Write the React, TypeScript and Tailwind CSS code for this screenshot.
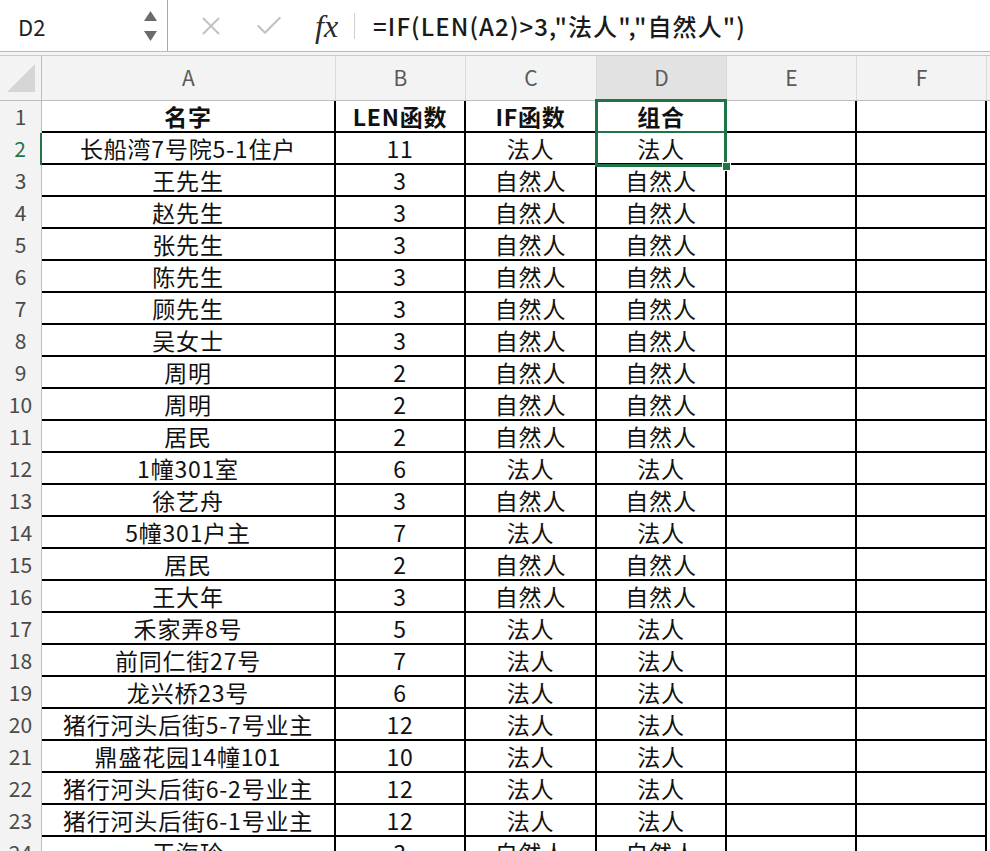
import { X, Check } from "lucide-react";

type Row = [string, string, string, string];

const rows: Row[] = [
  ["名字", "LEN函数", "IF函数", "组合"],
  ["长船湾7号院5-1住户", "11", "法人", "法人"],
  ["王先生", "3", "自然人", "自然人"],
  ["赵先生", "3", "自然人", "自然人"],
  ["张先生", "3", "自然人", "自然人"],
  ["陈先生", "3", "自然人", "自然人"],
  ["顾先生", "3", "自然人", "自然人"],
  ["吴女士", "3", "自然人", "自然人"],
  ["周明", "2", "自然人", "自然人"],
  ["周明", "2", "自然人", "自然人"],
  ["居民", "2", "自然人", "自然人"],
  ["1幢301室", "6", "法人", "法人"],
  ["徐艺舟", "3", "自然人", "自然人"],
  ["5幢301户主", "7", "法人", "法人"],
  ["居民", "2", "自然人", "自然人"],
  ["王大年", "3", "自然人", "自然人"],
  ["禾家弄8号", "5", "法人", "法人"],
  ["前同仁街27号", "7", "法人", "法人"],
  ["龙兴桥23号", "6", "法人", "法人"],
  ["猪行河头后街5-7号业主", "12", "法人", "法人"],
  ["鼎盛花园14幢101", "10", "法人", "法人"],
  ["猪行河头后街6-2号业主", "12", "法人", "法人"],
  ["猪行河头后街6-1号业主", "12", "法人", "法人"],
  ["王海玲", "3", "自然人", "自然人"],
];

const cellFont = { fontFamily: '"Noto Sans CJK SC", "Noto Sans", sans-serif' };

export default function App() {
  return (
    <div className="relative h-[851px] w-[990px] overflow-hidden bg-white" style={cellFont}>
      {/* formula bar */}
      <div className="flex h-[51px] items-center bg-white">
        <div className="flex h-full w-[168px] items-center justify-between border-r border-[#a8a8a8] pl-[18px] pr-[10px]">
          <span className="text-[22px] leading-none text-[#1f1f1f]">D2</span>
          <div className="flex flex-col items-center gap-[10px]">
            <svg width="13" height="10" viewBox="0 0 13 10">
              <path d="M6.5 0 L13 10 L0 10 Z" fill="#6b6b6b" />
            </svg>
            <svg width="13" height="10" viewBox="0 0 13 10">
              <path d="M0 0 L13 0 L6.5 10 Z" fill="#6b6b6b" />
            </svg>
          </div>
        </div>
        <div className="flex items-center pl-[28px]">
          <X className="h-[30px] w-[30px] text-[#c2c2c2]" strokeWidth={1.6} />
          <Check className="ml-[27px] h-[32px] w-[32px] text-[#c2c2c2]" strokeWidth={1.6} />
          <span
            className="ml-[30px] text-[32px] italic leading-none text-[#2a2a2a]"
            style={{ fontFamily: '"Liberation Serif", serif' }}
          >
            fx
          </span>
          <div className="ml-[16px] h-[26px] w-px bg-[#d0d0d0]" />
          <span className="ml-[18px] text-[24px] font-medium leading-none tracking-[1.1px] text-[#1a1a1a]">
            =IF(LEN(A2)&gt;3,"法人","自然人")
          </span>
        </div>
      </div>
      <div className="h-px bg-[#b9b9b9]" />
      <div className="h-[3px] bg-[#f4f4f4]" />
      <div className="h-px bg-[#c9c9c9]" />

      {/* column headers */}
      <div className="flex h-[45px] border-b border-[#bdbdbd] bg-[#f3f3f3] text-[21px] text-[#5a5a5a]">
        <div className="flex w-[42px] items-center justify-center border-r border-[#bdbdbd]">
          <svg width="28" height="28" viewBox="0 0 28 28">
            <path d="M28 0 L28 28 L0 28 Z" fill="#d6d6d6" />
          </svg>
        </div>
        <div className="flex w-[294px] items-center justify-center border-r border-[#dadada]">A</div>
        <div className="flex w-[130px] items-center justify-center border-r border-[#dadada]">B</div>
        <div className="flex w-[131px] items-center justify-center border-r border-[#dadada]">C</div>
        <div className="flex w-[130px] items-center justify-center border-r border-[#dadada] bg-[#e2e2e2]">D</div>
        <div className="flex w-[130px] items-center justify-center border-r border-[#dadada]">E</div>
        <div className="flex w-[130px] items-center justify-center border-r border-[#dadada]">F</div>
        <div className="flex-1" />
      </div>

      {/* grid */}
      <div className="relative">
        {rows.map((r, i) => {
          const n = i + 1;
          const head = n === 1;
          return (
            <div key={n} className="flex h-[32px]">
              <div
                className={`flex w-[42px] items-center justify-center bg-[#f3f3f3] text-[21px] ${
                  n === 2 ? "border-r-2 border-[#217346] text-[#217346]" : "border-r border-[#bdbdbd] text-[#4a4a4a]"
                }`}
              >
                {n}
              </div>
              <div className="flex border-b-2 border-black text-[23px] leading-none tracking-[0.8px] text-[#111]">
                <div className={`flex w-[294px] items-center justify-center border-r-2 border-black ${head ? "font-bold" : ""}`}>
                  {r[0]}
                </div>
                <div className={`flex w-[130px] items-center justify-center border-r-2 border-black ${head ? "font-bold" : ""}`}>
                  {r[1]}
                </div>
                <div className={`flex w-[131px] items-center justify-center border-r-2 border-black ${head ? "font-bold" : ""}`}>
                  {r[2]}
                </div>
                <div className={`flex w-[130px] items-center justify-center border-r-2 border-black ${head ? "font-bold" : ""}`}>
                  {r[3]}
                </div>
                <div className="w-[130px] border-r-2 border-black" />
                <div className="w-[130px] border-r-2 border-black" />
              </div>
              <div className="flex-1" />
            </div>
          );
        })}

        {/* selection D1:D2 */}
        <div className="pointer-events-none absolute left-[595px] top-[-2px] h-[68px] w-[132px] border-[3px] border-[#217346]" />
        <div className="pointer-events-none absolute left-[595px] top-[30px] h-[2px] w-[132px] bg-[#217346]" />
        <div className="pointer-events-none absolute left-[722px] top-[61px] h-[9px] w-[9px] border border-white bg-[#217346]" />
      </div>
    </div>
  );
}
